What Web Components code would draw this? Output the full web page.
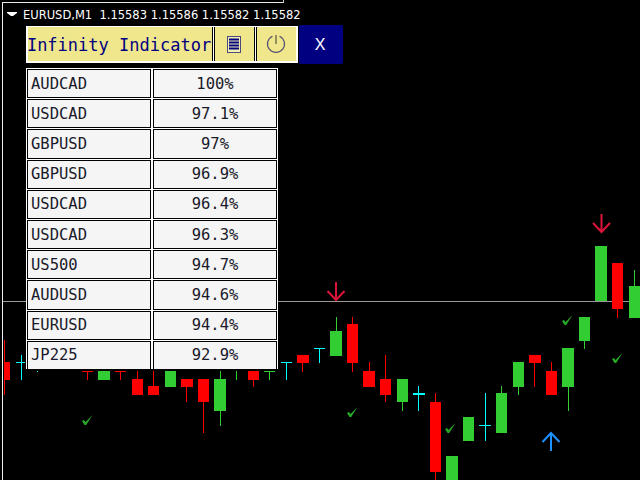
<!DOCTYPE html>
<html>
<head>
<meta charset="utf-8">
<title>EURUSD,M1</title>
<style>
  html, body { margin: 0; background: #000; }
</style>
</head>
<body>
<chart-window>
  <candle-canvas slot="canvas"></candle-canvas>
  <chart-title symbol="EURUSD,M1" prices="1.15583 1.15586 1.15582 1.15582"></chart-title>
  <indicator-panel>
    <panel-button slot="toolbar" class="title">Infinity Indicator</panel-button>
    <panel-button slot="toolbar" class="icon" icon="list"></panel-button>
    <panel-button slot="toolbar" class="icon last" icon="power"></panel-button>
    <close-button slot="close">X</close-button>
    <score-row><span slot="symbol">AUDCAD</span><span slot="value">100%</span></score-row>
    <score-row><span slot="symbol">USDCAD</span><span slot="value">97.1%</span></score-row>
    <score-row><span slot="symbol">GBPUSD</span><span slot="value">97%</span></score-row>
    <score-row><span slot="symbol">GBPUSD</span><span slot="value">96.9%</span></score-row>
    <score-row><span slot="symbol">USDCAD</span><span slot="value">96.4%</span></score-row>
    <score-row><span slot="symbol">USDCAD</span><span slot="value">96.3%</span></score-row>
    <score-row><span slot="symbol">US500</span><span slot="value">94.7%</span></score-row>
    <score-row><span slot="symbol">AUDUSD</span><span slot="value">94.6%</span></score-row>
    <score-row><span slot="symbol">EURUSD</span><span slot="value">94.4%</span></score-row>
    <score-row><span slot="symbol">JP225</span><span slot="value">92.9%</span></score-row>
  </indicator-panel>
</chart-window>

<script>
const UP = '#32cd32';
const DOWN = '#ff0000';
const DOJI = '#00ffff';

// x0, x1, bodyTop, bodyBottom, wickX, wickTop, wickBottom, colour
const CANDLES = [
  [4, 10, 362, 380, 4, 340, 395, DOWN],
  [16, 25, 362, 363, 21, 355, 380, DOJI],
  [37, 38, 371, 372, 37, 371, 372, DOJI],
  [82, 93, 371, 372, 87, 371, 380, DOWN],
  [98, 110, 371, 380, 104, 371, 380, UP],
  [115, 126, 371, 372, 120, 371, 380, DOWN],
  [132, 143, 379, 395, 137, 371, 395, DOWN],
  [148, 159, 386, 395, 153, 371, 395, DOWN],
  [165, 176, 371, 387, 170, 371, 387, UP],
  [181, 193, 379, 387, 186, 379, 402, DOWN],
  [198, 209, 379, 402, 203, 379, 433, DOWN],
  [214, 226, 379, 411, 220, 371, 426, UP],
  [236, 237, 371, 380, 236, 371, 380, UP],
  [248, 259, 371, 380, 253, 371, 387, DOWN],
  [264, 275, 371, 372, 269, 371, 380, UP],
  [281, 292, 362, 363, 286, 362, 380, DOJI],
  [297, 309, 355, 363, 302, 355, 372, DOWN],
  [314, 325, 348, 349, 319, 348, 363, DOJI],
  [330, 342, 331, 356, 336, 317, 356, UP],
  [347, 358, 324, 363, 352, 317, 372, DOWN],
  [363, 375, 371, 387, 369, 362, 387, DOWN],
  [380, 391, 379, 395, 385, 355, 402, DOWN],
  [397, 408, 379, 402, 402, 379, 411, UP],
  [413, 425, 393, 395, 418, 386, 411, DOJI],
  [430, 441, 402, 472, 435, 393, 480, DOWN],
  [446, 458, 456, 480, 452, 456, 480, UP],
  [463, 474, 417, 441, 468, 417, 441, UP],
  [479, 491, 425, 426, 485, 393, 441, DOJI],
  [496, 507, 393, 433, 501, 386, 433, UP],
  [513, 524, 362, 387, 518, 362, 395, UP],
  [529, 541, 355, 363, 534, 355, 387, DOWN],
  [546, 557, 371, 395, 551, 362, 395, DOWN],
  [562, 574, 348, 387, 568, 348, 411, UP],
  [579, 590, 317, 341, 584, 317, 349, UP],
  [595, 607, 246, 301, 601, 246, 301, UP],
  [612, 623, 263, 309, 617, 263, 318, DOWN],
  [629, 640, 286, 318, 634, 270, 318, UP]
];

const CHECKS = [[82, 415], [347, 407], [445, 423], [562, 315], [612, 353]];

// tip is where the arrow points
const ARROWS = [
  { x: 336, tip: 300, dir: -1, colour: '#dc143c' },
  { x: 601.5, tip: 232, dir: -1, colour: '#dc143c' },
  { x: 551, tip: 433, dir: 1, colour: '#1e90ff' }
];

class ChartWindow extends HTMLElement {
  constructor() {
    super();
    this.attachShadow({ mode: 'open' });
    this.shadowRoot.innerHTML = `
      <style>
        :host {
          display: block;
          position: relative;
          width: 640px;
          height: 480px;
          overflow: hidden;
          background: #000;
        }
        #front {
          position: relative;
          display: flex;
          flex-direction: column;
        }
      </style>
      <slot name="canvas"></slot>
      <div id="front"><slot></slot></div>
    `;
  }
}

class CandleCanvas extends HTMLElement {
  constructor() {
    super();
    this.attachShadow({ mode: 'open' });

    let shapes = '';
    const rect = (x, y, w, h, fill) => {
      shapes += `<rect x="${x}" y="${y}" width="${w}" height="${h}" fill="${fill}"/>`;
    };

    // window frame and the price line
    rect(2, 2, 281, 1, '#e8e8e8');
    rect(283, 0, 1, 3, '#c8c8c8');
    rect(2, 2, 1, 478, '#f0f0f0');
    rect(3, 301, 637, 1, '#999999');

    CANDLES.forEach(([x0, x1, top, bottom, wickX, wickTop, wickBottom, colour]) => {
      rect(wickX, wickTop, 1, wickBottom - wickTop, colour);
      rect(x0, top, x1 - x0, bottom - top, colour);
    });

    CHECKS.forEach(([x, y]) => {
      shapes += `<path d="M${x} ${y + 6} L${x + 2} ${y + 5} L${x + 3.5} ${y + 7} L${x + 10.5} ${y} L${x + 4.2} ${y + 10} L${x + 2.5} ${y + 10} Z"
        fill="#26a826"/>`;
    });

    ARROWS.forEach(({ x, tip, dir, colour }) => {
      const tail = tip + dir * 18;
      const wing = tip + dir * 9;
      shapes += `<path d="M${x} ${tail} L${x} ${tip} M${x - 8.5} ${wing} L${x} ${tip} L${x + 8.5} ${wing}"
        fill="none" stroke="${colour}" stroke-width="2"/>`;
    });

    this.shadowRoot.innerHTML = `
      <style>
        :host { position: absolute; left: 0; top: 0; width: 640px; height: 480px; }
        svg { display: block; }
      </style>
      <svg width="640" height="480" viewBox="0 0 640 480">${shapes}</svg>
    `;
  }
}

class ChartTitle extends HTMLElement {
  constructor() {
    super();
    this.attachShadow({ mode: 'open' });
    this.shadowRoot.innerHTML = `
      <style>
        :host {
          display: flex;
          align-items: center;
          height: 25px;
          box-sizing: border-box;
          padding: 4px 0 0 7px;
          color: #fff;
          font: 11.5px "DejaVu Sans", sans-serif;
        }
        svg { margin-right: 6px; }
        span { white-space: pre; }
      </style>
      <svg width="10" height="5" viewBox="0 0 10 5"><path d="M0 0H10V1L6 4H4L0 1Z" fill="#fff"/></svg>
      <span>${this.getAttribute('symbol')}  ${this.getAttribute('prices')}</span>
    `;
  }
}

class IndicatorPanel extends HTMLElement {
  constructor() {
    super();
    this.attachShadow({ mode: 'open' });
    this.shadowRoot.innerHTML = `
      <style>
        :host {
          display: block;
          margin-left: 26px;
        }
        #head {
          display: flex;
          align-items: center;
          gap: 1px;
          height: 39px;
          margin-bottom: 4px;
        }
        #tools {
          display: flex;
          gap: 1px;
          height: 37px;
          box-sizing: border-box;
          padding: 1px 2px 2px;
          background: #fff;
        }
        #rows {
          display: grid;
          grid-auto-rows: 29.2px;
          row-gap: 1px;
          width: 252px;
          height: 301px;
          box-sizing: border-box;
          padding: 1px 1px 0;
          overflow: hidden;
          background: #fff;
        }
      </style>
      <div id="head">
        <div id="tools"><slot name="toolbar"></slot></div>
        <slot name="close"></slot>
      </div>
      <div id="rows"><slot></slot></div>
    `;
  }
}

class PanelButton extends HTMLElement {
  constructor() {
    super();
    this.attachShadow({ mode: 'open' });
    const icons = {
      list: `<svg width="14" height="17" viewBox="0 0 14 17">
          <rect x="0.5" y="0.5" width="13" height="16" fill="#f5efb4" stroke="#4a4a80"/>
          <path d="M2 3.5H12M2 6.5H12M2 9.5H12M2 12.5H12" stroke="#000080" stroke-width="2"/>
        </svg>`,
      power: `<svg width="20" height="20" viewBox="0 0 20 20">
          <path d="M6.5 2.2A8.5 8.5 0 1 0 13.5 2.2" fill="none" stroke="#555070" stroke-width="1.2"/>
          <path d="M10 1V10" stroke="#5a5540" stroke-width="1.2"/>
        </svg>`
    };
    const icon = icons[this.getAttribute('icon')] || '';
    this.shadowRoot.innerHTML = `
      <style>
        :host {
          display: flex;
          align-items: center;
          justify-content: center;
          box-sizing: border-box;
          width: 185px;
          background: #f0e68c;
          border-right: 1px solid #000;
          color: #000080;
          font: 17px "DejaVu Sans Mono", monospace;
        }
        :host(.title) { padding: 2px 2px 0 0; }
        :host(.icon) { width: 41px; border-left: 1px solid #000; }
        :host(.last) { width: 40px; border-right: 0; }
        svg { display: block; margin-right: 2px; }
        slot { white-space: nowrap; }
      </style>
      ${icon}<slot></slot>
    `;
  }
}

class CloseButton extends HTMLElement {
  constructor() {
    super();
    this.attachShadow({ mode: 'open' });
    this.shadowRoot.innerHTML = `
      <style>
        :host {
          display: flex;
          align-items: center;
          justify-content: center;
          box-sizing: border-box;
          width: 44px;
          height: 39px;
          padding-right: 2px;
          border-radius: 2px;
          background: #000080;
          color: #fff;
          font: 16px "Liberation Sans", sans-serif;
        }
      </style>
      <slot></slot>
    `;
  }
}

class ScoreRow extends HTMLElement {
  constructor() {
    super();
    this.attachShadow({ mode: 'open' });
    this.shadowRoot.innerHTML = `
      <style>
        :host {
          display: grid;
          grid-template-columns: 124px 124px;
          column-gap: 2px;
          color: #1a1a2a;
          font: 15.5px "DejaVu Sans Mono", monospace;
        }
        div {
          display: flex;
          align-items: center;
          box-sizing: border-box;
          border: 1px solid #000;
          background: #f5f5f5;
        }
        #symbol { padding-left: 3px; }
        #value { justify-content: center; }
      </style>
      <div id="symbol"><slot name="symbol"></slot></div>
      <div id="value"><slot name="value"></slot></div>
    `;
  }
}

customElements.define('chart-window', ChartWindow);
customElements.define('candle-canvas', CandleCanvas);
customElements.define('chart-title', ChartTitle);
customElements.define('indicator-panel', IndicatorPanel);
customElements.define('panel-button', PanelButton);
customElements.define('close-button', CloseButton);
customElements.define('score-row', ScoreRow);
</script>
</body>
</html>
